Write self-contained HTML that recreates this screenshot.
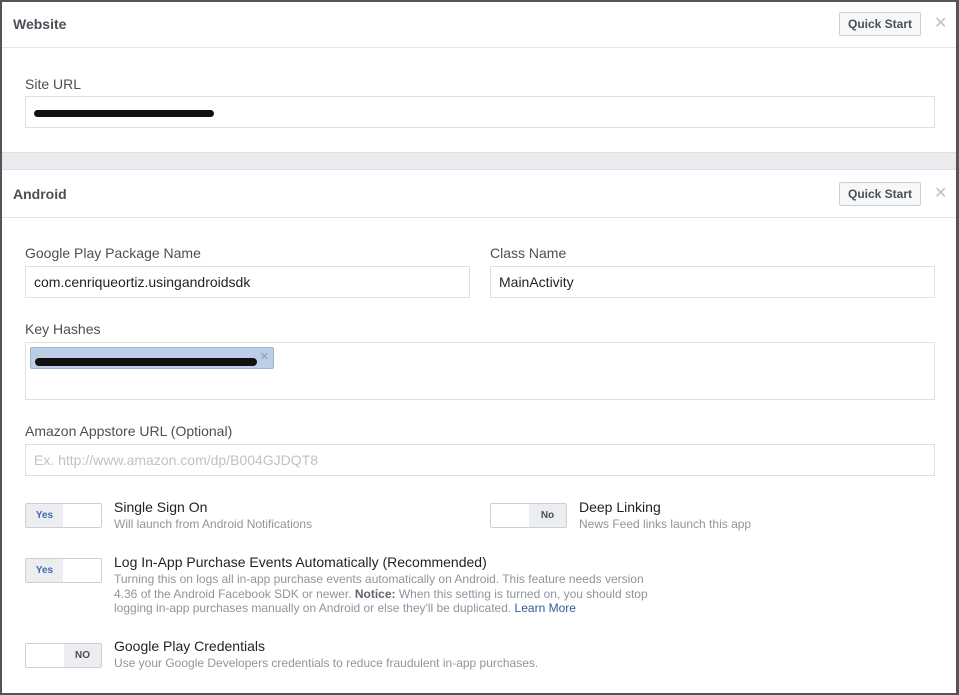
<!DOCTYPE html>
<html><head><style>
*{box-sizing:border-box;margin:0;padding:0}
body{width:959px;height:695px;background:#fff;font-family:"Liberation Sans",sans-serif;position:relative;overflow:hidden;color:#1d2129}
.frame{position:absolute;left:0;top:0;width:959px;height:695px;border:2px solid #555;border-right-width:3px}
.a{position:absolute}
.hdr{font-size:14px;font-weight:bold;color:#4b4f56}
.line{position:absolute;left:2px;right:3px;height:1px;background:#e5e5e5}
.qs{position:absolute;left:839px;width:82px;height:24px;border:1px solid #ccd0d5;background:#f6f7f9;border-radius:2px;font-size:12px;font-weight:bold;color:#4b4f56;text-align:center;line-height:22px}
.x{position:absolute;left:934px;font-size:16px;color:#bec2c9}
.lbl{position:absolute;font-size:14px;color:#4b4f56}
.inp{position:absolute;height:32px;border:1px solid #dddfe2;font-size:14px;line-height:30px;padding-left:8px;color:#1d2129}
.scr{display:inline-block;height:9px;background:#111;border-radius:4px;vertical-align:middle}
.tg{position:absolute;width:77px;height:25px;border:1px solid #ccd0d5;border-radius:2px;background:#fff}
.tg span{position:absolute;top:0;height:23px;width:37px;background:#ebedf0;font-size:10px;font-weight:bold;text-align:center;line-height:23px}
.t1{position:absolute;font-size:14px;color:#1d2129}
.t2{position:absolute;font-size:12px;color:#90949c;line-height:14.5px;white-space:nowrap}
</style></head><body>
<div class="a hdr" style="left:13px;top:16px">Website</div>
<div class="qs" style="top:12px">Quick Start</div><div class="x" style="top:13px">✕</div>
<div class="line" style="top:47px"></div>
<div class="lbl" style="left:25px;top:76px">Site URL</div>
<div class="inp" style="left:25px;top:96px;width:910px"><span class="scr" style="width:180px;height:7px"></span></div>
<div class="a" style="left:2px;top:152px;width:954px;height:18px;background:#e9ebee;border-top:1px solid #dddfe2;border-bottom:1px solid #dddfe2"></div>
<div class="a hdr" style="left:13px;top:186px">Android</div>
<div class="qs" style="top:182px">Quick Start</div><div class="x" style="top:183px">✕</div>
<div class="line" style="top:217px"></div>
<div class="lbl" style="left:25px;top:245px">Google Play Package Name</div>
<div class="inp" style="left:25px;top:266px;width:445px">com.cenriqueortiz.usingandroidsdk</div>
<div class="lbl" style="left:490px;top:245px">Class Name</div>
<div class="inp" style="left:490px;top:266px;width:445px">MainActivity</div>
<div class="lbl" style="left:25px;top:321px">Key Hashes</div>
<div class="a" style="left:25px;top:342px;width:910px;height:58px;border:1px solid #dddfe2"></div>
<div class="a" style="left:30px;top:347px;width:244px;height:22px;background:#bdcde6;border:1px solid #9cb4d8;border-radius:2px;padding:5px 4px"><span class="scr" style="width:222px;height:8px;display:inline-block"></span><span style="position:absolute;right:4px;top:2px;font-size:11px;color:#8a9bb8">✕</span></div>
<div class="lbl" style="left:25px;top:423px">Amazon Appstore URL (Optional)</div>
<div class="inp" style="left:25px;top:444px;width:910px;color:#bec2c9">Ex. http://www.amazon.com/dp/B004GJDQT8</div>
<div class="tg" style="left:25px;top:503px"><span style="left:0;color:#4267b2">Yes</span></div>
<div class="t1" style="left:114px;top:499px">Single Sign On</div>
<div class="t2" style="left:114px;top:517px">Will launch from Android Notifications</div>
<div class="tg" style="left:490px;top:503px"><span style="right:0;color:#4b4f56">No</span></div>
<div class="t1" style="left:579px;top:499px">Deep Linking</div>
<div class="t2" style="left:579px;top:517px">News Feed links launch this app</div>
<div class="tg" style="left:25px;top:558px"><span style="left:0;color:#4267b2">Yes</span></div>
<div class="t1" style="left:114px;top:554px">Log In-App Purchase Events Automatically (Recommended)</div>
<div class="t2" style="left:114px;top:572px">Turning this on logs all in-app purchase events automatically on Android. This feature needs version<br>4.36 of the Android Facebook SDK or newer. <b style="color:#606770">Notice:</b> When this setting is turned on, you should stop<br>logging in-app purchases manually on Android or else they'll be duplicated. <span style="color:#365899">Learn More</span></div>
<div class="tg" style="left:25px;top:643px"><span style="right:0;color:#4b4f56">NO</span></div>
<div class="t1" style="left:114px;top:638px">Google Play Credentials</div>
<div class="t2" style="left:114px;top:656px">Use your Google Developers credentials to reduce fraudulent in-app purchases.</div>
<div class="frame"></div>
</body></html>
